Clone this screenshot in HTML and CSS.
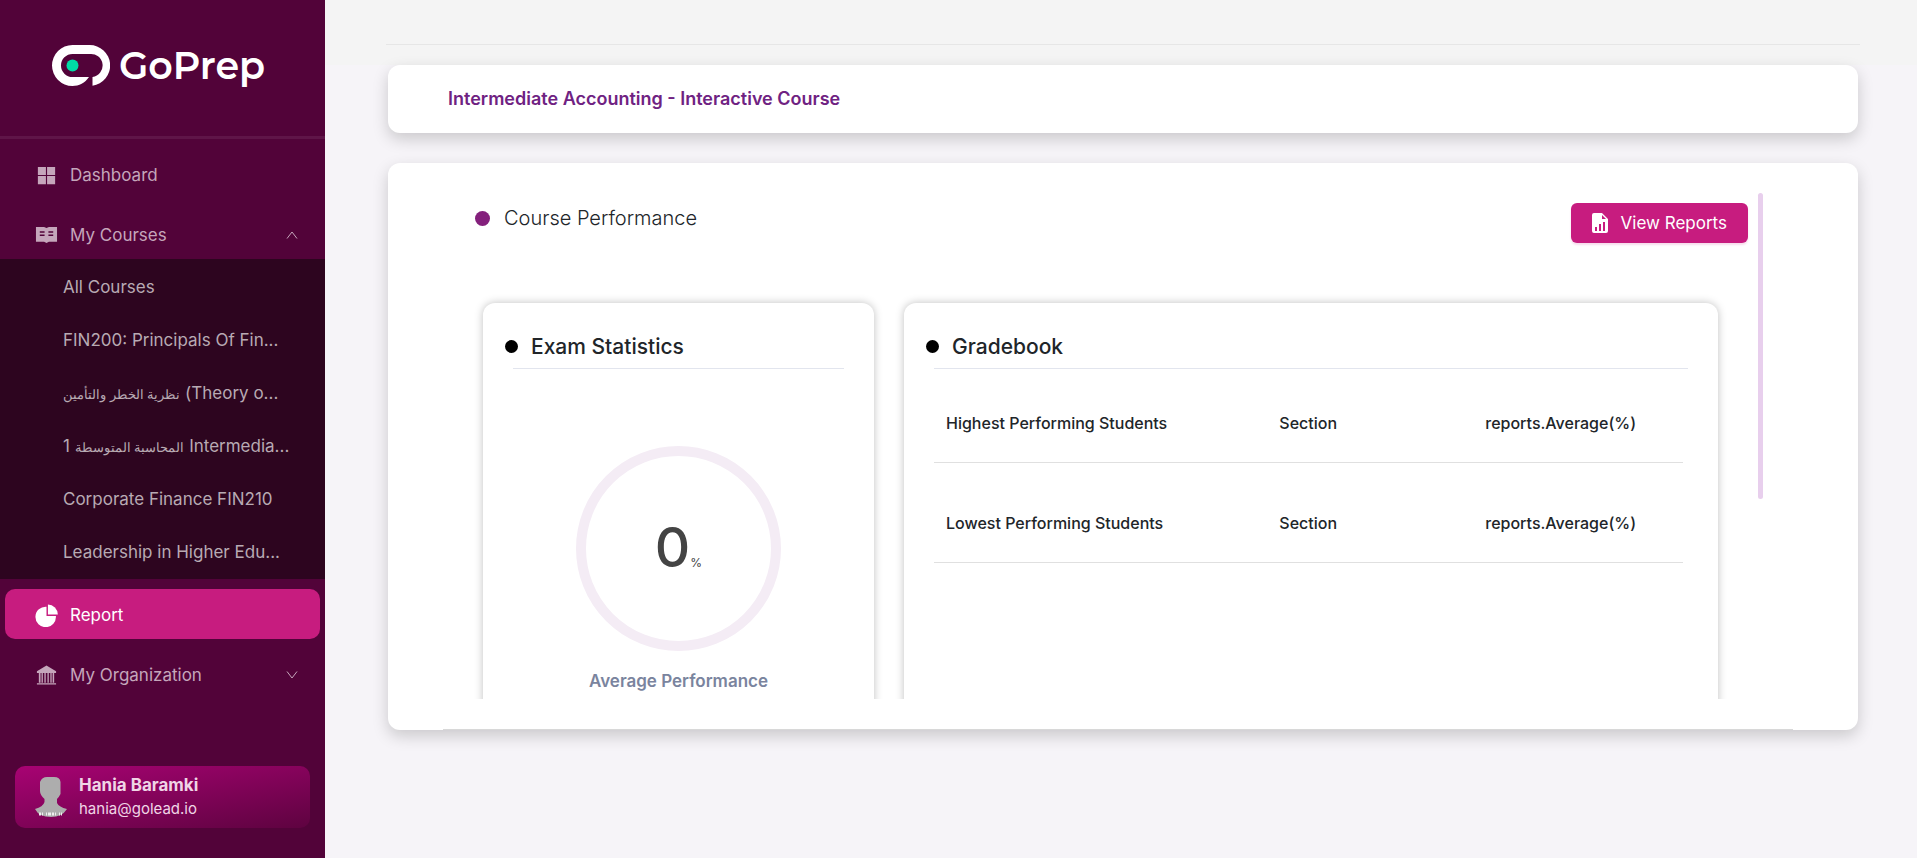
FILE: index.html
```html
<!DOCTYPE html>
<html lang="en">
<head>
    <meta charset="UTF-8">
    <meta name="viewport" content="width=device-width, initial-scale=1.0">
    <title>GoPrep - Report</title>
    <link rel="stylesheet" href="styles.css">
</head>
<body>
    <div class="layout">
        <aside class="sidebar">
            <div class="brand">
                <svg class="brand-mark" width="58" height="42" viewBox="0 0 58 42">
                    <path fill="#fff" fill-rule="evenodd" d="M20.500 0H37.500A20.500 20.500 0 0 1 40.500 40.800V32A11.500 11.500 0 0 0 37.500 9H20.500A11.500 11.500 0 0 0 20.500 32H37C33 38 27 41 20.500 41A20.500 20.500 0 0 1 20.500 0Z"/>
                    <circle cx="20.500" cy="20.500" r="6" fill="#00dba6"/>
                </svg>
                <span class="brand-name">GoPrep</span>
            </div>

            <nav class="menu">
                <a class="menu-item" href="#">
                    <svg class="menu-icon" viewBox="0 0 24 24" fill="currentColor"><path d="M3 3h8.400v8.400H3zM12.600 3H21v8.400h-8.400zM3 12.600h8.400V21H3zM12.600 12.600H21V21h-8.400z"/></svg>
                    <span>Dashboard</span>
                </a>
                <a class="menu-item" href="#">
                    <svg class="menu-icon" viewBox="0 0 24 24" fill="currentColor"><path fill-rule="evenodd" d="M1 3h8.500L12 4.300 14.500 3H23v15.500h-8.500L12 19.800l-2.500-1.300H1zM5 7.500v1.500h5V7.500zM5 11v1.500h5V11zM14 7.500v1.500h5V7.500zM14 11v1.500h5V11z"/></svg>
                    <span>My Courses</span>
                    <svg class="chevron" viewBox="0 0 12 8" fill="none" stroke="currentColor"><path d="M1 7.500 6 1l5 6.500"/></svg>
                </a>
                <div class="submenu">
                    <a href="#">All Courses</a>
                    <a href="#">FIN200: Principals Of Fin...</a>
                    <a href="#"><bdi class="arabic">نظرية الخطر والتأمين</bdi> (Theory o...</a>
                    <a href="#">1 <bdi class="arabic">المحاسبة المتوسطة</bdi> Intermedia...</a>
                    <a href="#">Corporate Finance FIN210</a>
                    <a href="#">Leadership in Higher Edu...</a>
                </div>
                <a class="menu-item active" href="#">
                    <svg class="menu-icon" viewBox="0 0 24 24" fill="currentColor"><path d="M12 2.800V12.500h9.800A10.700 10.700 0 1 1 12 2.800z"/><path d="M13.500 0.600A10.500 10.500 0 0 1 23.800 11H13.500z"/></svg>
                    <span>Report</span>
                </a>
                <a class="menu-item" href="#">
                    <svg class="menu-icon" viewBox="0 0 24 24" fill="currentColor"><path d="M12 1.500 22 7.500v2H2v-2zM4 9.500h1.800v10H4zM6.800 9.500h1.400v10H6.800zM9.800 9.500h1.400v10H9.800zM13 9.500h1.400v10H13zM16 9.500h1.400v10H16zM18.400 9.500H20v10h-1.600zM2 20h20v1.500H2z"/></svg>
                    <span>My Organization</span>
                    <svg class="chevron" viewBox="0 0 12 8" fill="none" stroke="currentColor"><path d="M1 .5 6 7l5-6.500"/></svg>
                </a>
            </nav>

            <div class="user">
                <svg class="avatar" width="34" height="42" viewBox="0 0 34 42">
                    <path fill="#adadad" d="M6 6Q8 1 13 1H20Q26 1 26.500 6V18Q25 21 23 23V27Q25 31 33 33Q28 41 17 41Q5 41 1 33Q9 31 10.500 26V23Q6 19 6 15Z"/>
                    <path stroke="#eee" stroke-width="3" stroke-dasharray="2 1 1 3 1 1 3 1" d="M5 38h23"/>
                </svg>
                <div class="user-info">
                    <strong>Hania Baramki</strong>
                    <span>hania@golead.io</span>
                </div>
            </div>
        </aside>

        <main class="content">
            <div class="topbar"><div class="topbar-line"></div></div>
            <section class="title-card">
                <h1>Intermediate Accounting - Interactive Course</h1>
            </section>

            <section class="report-card">
                <div class="report-inner">
                    <div class="report-scroll">
                        <div class="report-body">
                            <header class="report-head">
                                <h2>Course Performance</h2>
                                <button class="btn" type="button">
                                    <svg width="16" height="20" viewBox="0 0 16 20"><path fill="#fff" fill-rule="evenodd" d="M2 0H10L16 6V18Q16 20 14 20H2Q0 20 0 18V2Q0 0 2 0ZM10 2V6H14ZM3 14V18H5V14ZM7 11V18H9V11ZM11 9V18H13V9Z"/></svg>
                                    View Reports
                                </button>
                            </header>
                            <div class="panels">
                                <article class="panel">
                                    <h3>Exam Statistics</h3>
                                    <div class="gauge"><b>0</b><small>%</small></div>
                                    <p class="gauge-label">Average Performance</p>
                                </article>
                                <article class="panel">
                                    <h3>Gradebook</h3>
                                    <table>
                                        <tr>
                                            <th>Highest Performing Students</th>
                                            <th>Section</th>
                                            <th>reports.Average(%)</th>
                                        </tr>
                                        <tr>
                                            <th>Lowest Performing Students</th>
                                            <th>Section</th>
                                            <th>reports.Average(%)</th>
                                        </tr>
                                    </table>
                                </article>
                            </div>
                        </div>
                        <div class="scroll-thumb"></div>
                    </div>
                </div>
            </section>
        </main>
    </div>
</body>
</html>
```
FILE: styles.css
```css
* {
    box-sizing: border-box;
}
body {
    margin: 0;
    font-family: Inter, "Noto Sans", sans-serif;
    color: #212529;
    background-color: #f6f4f8;
}
h1, h2, h3, p {
    margin: 0;
}
a {
    color: inherit;
    text-decoration: none;
}
.layout {
    display: flex;
    min-height: 100vh;
}

/* Sidebar */
.sidebar {
    display: flex;
    flex-direction: column;
    flex: 0 0 325px;
    background-color: #520339;
    color: #c5a6bb;
    font-size: 17px;
}
.brand {
    display: flex;
    align-items: center;
    gap: 9px;
    height: 139px;
    padding: 0 0 4px 52px;
    border-bottom: 3px solid #5f1548;
    color: #fff;
}
.brand-name {
    font-family: Montserrat, Inter, sans-serif;
    font-size: 38px;
    font-weight: 600;
    line-height: 40px;
}
.menu {
    padding-top: 10px;
}
.menu-item {
    display: flex;
    align-items: center;
    height: 50px;
    margin: 0 5px 10px;
    padding: 2px 22px 0 30px;
    border-radius: 10px;
}
.menu-icon {
    width: 23px;
    height: 23px;
    margin-right: 12px;
}
.chevron {
    width: 12px;
    height: 8px;
    margin-left: auto;
}
.active {
    background-color: #c71c7f;
    color: #fff;
}
.submenu {
    margin: -10px 0 10px;
    padding-top: 2px;
    background-color: #2d051f;
    color: #b8aab3;
}
.submenu a {
    display: block;
    height: 53px;
    padding-left: 63px;
    line-height: 52px;
    white-space: nowrap;
}
.arabic {
    font-size: 13px;
}
.user {
    display: flex;
    align-items: center;
    gap: 11px;
    height: 62px;
    margin: auto 15px 30px;
    padding: 0 19px;
    border-radius: 10px;
    background: linear-gradient(170deg, #a80373, #5e0340);
    color: #f0d5e6;
}
.user-info {
    display: flex;
    flex-direction: column;
    font-size: 15px;
    line-height: 24px;
}
.user-info strong {
    font-size: 17px;
}

/* Content */
.content {
    flex: 1;
    min-width: 0;
    padding: 0 59px 0 63px;
}
.topbar {
    height: 65px;
    margin: 0 -59px 0 -63px;
    padding: 44px 57px 0 61px;
    background-color: #f4f4f4;
}
.topbar-line {
    height: 1px;
    background-color: #e6e6e6;
}
.title-card,
.report-card {
    border-radius: 12px;
    background-color: #fff;
    box-shadow: 0 6px 16px rgba(0, 0, 0, 0.18);
}
.title-card {
    margin-bottom: 30px;
    padding: 20px 60px;
}
.title-card h1 {
    color: #6f2282;
    font-size: 18px;
    font-weight: 600;
    line-height: 28px;
}
.report-card {
    padding: 30px 65px 0 55px;
}
.report-inner {
    padding: 0 30px 30px 0;
    border-bottom: 1px solid #d8d8d8;
}
.report-scroll {
    display: flex;
    height: 506px;
    overflow: hidden;
}
.report-body {
    flex: 1;
    min-width: 0;
    padding: 10px 10px 0 30px;
}
.scroll-thumb {
    width: 5px;
    height: 306px;
    border-radius: 3px;
    background-color: #e8cfed;
}
.report-head {
    display: flex;
    justify-content: space-between;
    align-items: flex-start;
    margin-bottom: 60px;
}
.report-head h2 {
    display: flex;
    align-items: center;
    gap: 14px;
    padding-left: 2px;
    font-size: 20px;
    font-weight: 300;
    line-height: 31px;
}
.report-head h2::before {
    content: "";
    width: 15px;
    height: 15px;
    border-radius: 50%;
    background-color: #84207c;
}
.btn {
    display: flex;
    align-items: center;
    gap: 13px;
    height: 40px;
    padding: 0 21px;
    border: none;
    border-radius: 6px;
    background-color: #c71c7f;
    box-shadow: 0 2px 2px rgba(199, 28, 127, 0.15);
    color: #fff;
    font: 17px Inter, sans-serif;
    cursor: pointer;
}
.panels {
    display: grid;
    grid-template-columns: 391fr 814fr;
    gap: 30px;
    padding: 0 30px 0 10px;
}
.panel {
    height: 480px;
    padding: 25px 30px;
    border-radius: 12px;
    box-shadow: 0 0 8px rgba(0, 0, 0, 0.25);
}
.panel h3 {
    display: flex;
    align-items: center;
    gap: 13px;
    padding-bottom: 3px;
    border-bottom: 1px solid #e2e5ee;
    font-size: 21px;
    font-weight: 500;
    line-height: 37px;
}
.panel h3::before {
    content: "";
    width: 13px;
    height: 13px;
    margin-left: -8px;
    border-radius: 50%;
    background-color: #000;
}
.gauge {
    display: flex;
    justify-content: center;
    align-items: baseline;
    width: 205px;
    height: 205px;
    margin: 77px auto 15px;
    border: 10px solid #f4ecf5;
    border-radius: 50%;
    color: #444;
    line-height: 183px;
}
.gauge b {
    font-size: 55px;
    font-weight: 500;
}
.gauge small {
    font-size: 12px;
}
.gauge-label {
    color: #7a849e;
    font-size: 17px;
    font-weight: 600;
    line-height: 30px;
    text-align: center;
}
table {
    width: calc(100% - 5px);
    table-layout: fixed;
    border-collapse: collapse;
}
th {
    padding: 50px 12px 29px;
    border-bottom: 1px solid #e0e0e0;
    font-size: 16px;
    font-weight: 500;
    line-height: 20px;
    text-align: left;
}
tr:first-child th {
    padding-top: 44px;
}
th:first-child {
    width: 44.5%;
}
th:last-child {
    width: 28%;
}
```
